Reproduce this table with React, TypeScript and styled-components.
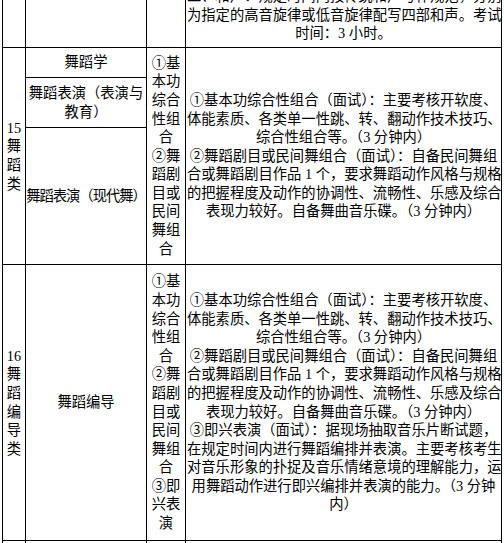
import styled, { createGlobalStyle } from "styled-components";

const GlobalStyle = createGlobalStyle`
  html, body {
    margin: 0;
    padding: 0;
    background: #fff;
  }
  body {
    font-family: "Liberation Serif", "Noto Sans CJK SC", serif;
    color: #000;
    overflow: hidden;
  }
`;

const Sheet = styled.table`
  border-collapse: collapse;
  table-layout: fixed;
  width: 499px;
  margin: -18px 0 0 2px;
  font-size: 14.3px;
  line-height: 18.6px;
`;

const Row = styled.tr<{ $h: number }>`
  height: ${(p) => p.$h}px;
`;

const Cell = styled.td`
  border: 1px solid #000;
  padding: 0;
  text-align: center;
  vertical-align: middle;
  overflow: hidden;
`;

const IndexCell = styled(Cell)`
  padding: 0 1px;
`;

const MajorCell = styled(Cell)<{ $tight?: boolean }>`
  padding: 0;
  white-space: ${(p) => (p.$tight ? "nowrap" : "normal")};
  letter-spacing: ${(p) => (p.$tight ? "-1px" : "0")};
`;

const SubjectCell = styled(Cell)`
  padding: 0 1px;
`;

const ContentCell = styled(Cell)`
  padding: 0 1px;
  white-space: nowrap;
`;

const Lines = ({ items }: { items: string[] }) => (
  <>
    {items.map((t, i) => (
      <span key={i}>
        {t}
        {i < items.length - 1 && <br />}
      </span>
    ))}
  </>
);

const danceBasic = [
  "①基本功综合性组合（面试）：主要考核开软度、",
  "体能素质、各类单一性跳、转、翻动作技术技巧、",
  "综合性组合等。（3 分钟内）",
  "②舞蹈剧目或民间舞组合（面试）：自备民间舞组",
  "合或舞蹈剧目作品 1 个，要求舞蹈动作风格与规格",
  "的把握程度及动作的协调性、流畅性、乐感及综合",
  "表现力较好。自备舞曲音乐碟。（3 分钟内）",
];

const improv = [
  "③即兴表演（面试）：据现场抽取音乐片断试题，",
  "在规定时间内进行舞蹈编排并表演。主要考核考生",
  "对音乐形象的扑捉及音乐情绪意境的理解能力，运",
  "用舞蹈动作进行即兴编排并表演的能力。（3 分钟",
  "内）",
];

const subjects15 = ["①基", "本功", "综合", "性组", "合", "②舞", "蹈剧", "目或", "民间", "舞组", "合"];
const subjects16 = [...subjects15, "③即", "兴表", "演"];

const App = () => {
  return (
    <>
      <GlobalStyle />
      <Sheet>
        <colgroup>
          <col style={{ width: 23 }} />
          <col style={{ width: 121 }} />
          <col style={{ width: 39 }} />
          <col style={{ width: 316 }} />
        </colgroup>
        <tbody>
          <Row $h={65}>
            <IndexCell />
            <MajorCell />
            <SubjectCell />
            <ContentCell>
              <Lines
                items={[
                  "二、和声：规定时间内按传统和声写作规范，分别",
                  "为指定的高音旋律或低音旋律配写四部和声。考试",
                  "时间：3 小时。",
                ]}
              />
            </ContentCell>
          </Row>
          <Row $h={30}>
            <IndexCell rowSpan={3}>
              <Lines items={["15", "舞", "蹈", "类"]} />
            </IndexCell>
            <MajorCell>舞蹈学</MajorCell>
            <SubjectCell rowSpan={3}>
              <Lines items={subjects15} />
            </SubjectCell>
            <ContentCell rowSpan={3}>
              <Lines items={danceBasic} />
            </ContentCell>
          </Row>
          <Row $h={50}>
            <MajorCell>
              <Lines items={["舞蹈表演（表演与", "教育）"]} />
            </MajorCell>
          </Row>
          <Row $h={137}>
            <MajorCell $tight>舞蹈表演（现代舞）</MajorCell>
          </Row>
          <Row $h={276}>
            <IndexCell>
              <Lines items={["16", "舞", "蹈", "编", "导", "类"]} />
            </IndexCell>
            <MajorCell>舞蹈编导</MajorCell>
            <SubjectCell>
              <Lines items={subjects16} />
            </SubjectCell>
            <ContentCell>
              <Lines items={[...danceBasic, ...improv]} />
            </ContentCell>
          </Row>
          <Row $h={6}>
            <IndexCell />
            <MajorCell />
            <SubjectCell />
            <ContentCell />
          </Row>
        </tbody>
      </Sheet>
    </>
  );
};

export default App;
